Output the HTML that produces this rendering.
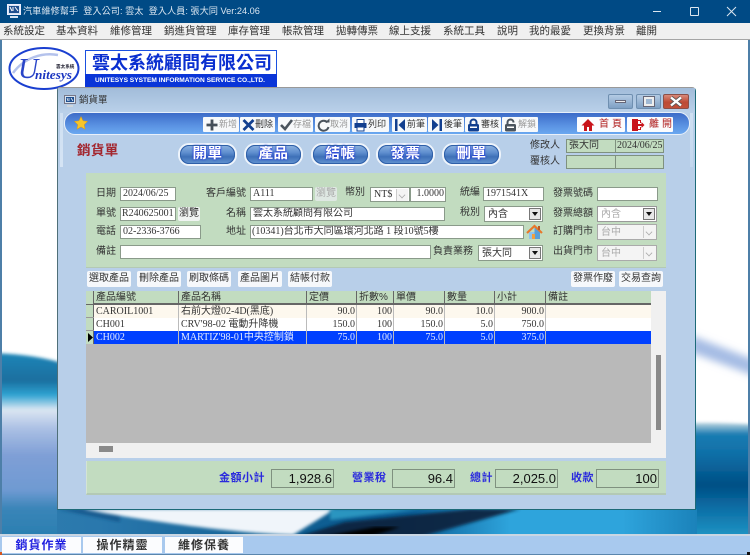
<!DOCTYPE html>
<html lang="zh-Hant"><head><meta charset="utf-8"><title>汽車維修幫手</title>
<style>
*{box-sizing:border-box}
html,body{margin:0;padding:0;width:750px;height:555px;overflow:hidden;background:#fff}
body{position:relative;font-family:"Liberation Sans","Noto Sans CJK TC",sans-serif;font-size:11px;color:#222}
div,span,svg{position:absolute}
.t{white-space:nowrap;line-height:14px}
.m{top:23px;height:17px;line-height:16px;font-size:10.5px;color:#333;white-space:nowrap}
.tb{top:117px;height:15px;background:#f7f9fb;border-radius:1px;line-height:15px;font-size:9px;color:#333;white-space:nowrap}
.tb span{line-height:15px}.dis{color:#999}
.tb svg{top:1px;left:2px}
.big{top:143px;width:59px;height:23px;border-radius:11px;border:2px solid #eef4fb;outline:1px solid #2e5fa8;outline-offset:-3px;background:linear-gradient(#8fb3df,#5f8fcf 40%,#3e70b8 62%,#6495d2);color:#fff;font-size:14.5px;font-weight:bold;text-align:center;line-height:19px;letter-spacing:.5px;text-shadow:0 0 2px #2238d8,0 0 2px #2238d8}
.l{white-space:nowrap;line-height:14px;font-size:10px;color:#333}
.i{background:#fff;border:1px solid #8a9a8a;height:14px;line-height:12px;padding-left:2px;font-family:"Liberation Serif","Noto Sans CJK TC",serif;font-size:10px;color:#333;white-space:nowrap;overflow:hidden}
.s{background:#fff;border:1px solid #8a9a8a;height:16px;line-height:15px;padding-left:3px;font-size:10px;color:#333;white-space:nowrap}
.s .a{right:1px;top:1px;width:12px;height:12px;background:#e8e8e8;border:1px solid #777}
.s .a:after{content:"";position:absolute;left:2px;top:3px;border-left:3px solid transparent;border-right:3px solid transparent;border-top:4px solid #111}
.c .a{background:#f4f4f4;border:0;border-left:1px solid #ccc}
.c .a:after{left:2px;top:3px;width:5px;height:5px;border:0;border-right:1px solid #aaa;border-bottom:1px solid #aaa;transform:rotate(45deg) scale(.8)}
.d{color:#aaa}
.btn{top:271px;height:16px;background:#f6f8fb;border-radius:2px;text-align:center;line-height:16px;font-size:10px;color:#333;white-space:nowrap}
.h{top:291px;height:14px;background:#c2dcc0;border-right:1px solid #666;border-bottom:2px solid #666;line-height:13px;font-size:10px;padding-left:2px;color:#333;white-space:nowrap}
.r{height:13px;line-height:13px;font-family:"Liberation Serif","Noto Sans CJK TC",serif;font-size:10px;white-space:nowrap;color:#333;border-right:1px solid #bbb;padding:0 1px 0 2px;overflow:hidden}
.n{text-align:right}
.w{color:#e6ecff}
.sum{top:469px;height:19px;width:63px;background:#c2dcc0;border:1px solid #7f917f;text-align:right;padding-right:1px;font-size:13px;line-height:18px;color:#111}
.sl{top:469px;color:#2a2add;font-size:11px;line-height:18px;font-weight:bold;white-space:nowrap;letter-spacing:.5px}
.tab{top:537px;height:16px;background:#fbfcfe;text-align:center;font-size:12px;font-weight:bold;line-height:16px;letter-spacing:1px;color:#333}
</style></head><body>

<!-- desktop background -->
<svg style="left:0;top:40px" width="750" height="496" viewBox="0 40 750 496">
<defs>
<linearGradient id="lw" gradientUnits="userSpaceOnUse" x1="0" y1="353" x2="0" y2="536"><stop offset="0" stop-color="#1f86b8"/><stop offset=".15" stop-color="#1a6f9f"/><stop offset=".23" stop-color="#2fa3d2"/><stop offset=".31" stop-color="#dbe6f2"/><stop offset=".42" stop-color="#a8bee3"/><stop offset=".56" stop-color="#7f9fd6"/><stop offset=".75" stop-color="#6f9ad2"/><stop offset=".85" stop-color="#3a85b8"/><stop offset="1" stop-color="#2a7fb1"/></linearGradient>
<linearGradient id="rw" gradientUnits="userSpaceOnUse" x1="0" y1="423" x2="0" y2="536"><stop offset="0" stop-color="#b9d3df"/><stop offset=".1" stop-color="#1a7cb2"/><stop offset=".28" stop-color="#0f6fa7"/><stop offset=".55" stop-color="#004f85"/><stop offset=".75" stop-color="#0c6ea5"/><stop offset="1" stop-color="#1f94c4"/></linearGradient>
<linearGradient id="bt" gradientUnits="userSpaceOnUse" x1="0" y1="0" x2="750" y2="0"><stop offset="0" stop-color="#2e7dae"/><stop offset=".13" stop-color="#2a78ad"/><stop offset=".4" stop-color="#0e5d90"/><stop offset=".55" stop-color="#0c5f97"/><stop offset=".68" stop-color="#2ea4dc"/><stop offset=".83" stop-color="#2ea4dc"/><stop offset="1" stop-color="#0d6aa2"/></linearGradient>
<filter id="b1" x="-20%" y="-20%" width="140%" height="140%"><feGaussianBlur stdDeviation="4"/></filter>
<filter id="b2" x="-10%" y="-10%" width="120%" height="120%"><feGaussianBlur stdDeviation="1.5"/></filter>
</defs>
<rect x="0" y="40" width="750" height="496" fill="#fff"/>
<path d="M690 335 L760 362 L760 378 L690 352Z" fill="#a5bce4" filter="url(#b1)"/>
<path d="M-10 353 Q35 354 65 364 L65 546 L-10 546Z" fill="url(#lw)" filter="url(#b2)"/>
<path d="M690 423 Q720 422 760 425 L760 546 L690 546Z" fill="url(#rw)" filter="url(#b2)"/>
<rect x="57" y="509" width="640" height="27" fill="url(#bt)"/>
<path d="M57 509 L120 509 L120 522 Z" fill="#175a8f" filter="url(#b2)"/>
<path d="M83 509 L335 509 L293 535 C230 533 140 520 83 509Z" fill="#f0f5fa" filter="url(#b2)"/>
<path d="M330 509 L420 509 L330 520Z" fill="#2c95c0" filter="url(#b2)"/>
<path d="M296 537 L345 522 L470 509 L520 509 L420 537Z" fill="#07233d" filter="url(#b2)" opacity=".92"/>
<path d="M320 537 L375 527 L400 527 L370 537Z" fill="#000" filter="url(#b2)"/>
</svg>
<div style="left:0;top:40px;width:2px;height:495px;background:#4d7fa8"></div>
<div style="left:748px;top:40px;width:2px;height:495px;background:#4d7fa8"></div>

<!-- titlebar -->
<div style="left:0;top:0;width:750px;height:23px;background:#004a85"></div>
<svg style="left:7px;top:4px" width="14" height="15" viewBox="0 0 14 15"><rect x=".5" y=".5" width="13" height="10" fill="#d7e4f2" stroke="#eef"/><rect x="2" y="2" width="10" height="7" fill="#1f4f8f"/><path d="M3 3l2 4M6 3v4M8 3l3 4" stroke="#fff" fill="none"/><rect x="3" y="12" width="8" height="2" fill="#d7e4f2"/></svg>
<div class="t" style="left:23px;top:4px;color:#d9e5f0;font-size:9.2px;line-height:15px">汽車維修幫手&nbsp; 登入公司: 雲太&nbsp; 登入人員: 張大同 Ver:24.06</div>
<div style="left:653px;top:11px;width:8px;height:1px;background:#dce6ef"></div>
<div style="left:690px;top:7px;width:9px;height:9px;border:1px solid #dce6ef;border-radius:1px"></div>
<svg style="left:726px;top:6px" width="11" height="11"><path d="M1 1l9 9M10 1l-9 9" stroke="#dce6ef" fill="none"/></svg>

<!-- menu -->
<div style="left:0;top:23px;width:750px;height:17px;background:#f0f0f0;border-bottom:1px solid #a5a5a5"></div>
<div class="m" style="left:3px">系統設定</div><div class="m" style="left:56px">基本資料</div><div class="m" style="left:110px">維修管理</div><div class="m" style="left:164px">銷進貨管理</div><div class="m" style="left:228px">庫存管理</div><div class="m" style="left:282px">帳款管理</div><div class="m" style="left:336px">拋轉傳票</div><div class="m" style="left:389px">線上支援</div><div class="m" style="left:443px">系統工具</div><div class="m" style="left:497px">說明</div><div class="m" style="left:529px">我的最愛</div><div class="m" style="left:583px">更換背景</div><div class="m" style="left:636px">離開</div>

<!-- logo -->
<svg style="left:8px;top:46px" width="72" height="45" viewBox="0 0 72 45"><ellipse cx="36" cy="22.5" rx="34.500" ry="20.500" fill="#fff" stroke="#1a3fd0" stroke-width="2"/><path d="M5 27C16 12 34 6 50 9" fill="none" stroke="#b4c2ec" stroke-width="2.500"/><text x="10" y="32" font-family="Liberation Serif,serif" font-style="italic" font-size="28" fill="#2a45c8">U</text><text x="27" y="33" font-family="Liberation Serif,serif" font-style="italic" font-weight="bold" font-size="12.500" fill="#1a35c0" textLength="37" lengthAdjust="spacingAndGlyphs">nitesys</text><text x="48" y="22" font-size="4.600" font-weight="bold" fill="#223" font-family="Noto Sans CJK TC,sans-serif">雲太系統</text></svg>
<div style="left:85px;top:50px;width:192px;height:37px;background:#fff;border:1px solid #1a50e0"></div>
<div class="t" style="left:92px;top:51px;font-size:18px;line-height:24px;font-weight:bold;color:#0a2fd0">雲太系統顧問有限公司</div>
<div style="left:85px;top:74px;width:192px;height:13px;background:#0a35d8"></div>
<div class="t" style="left:95px;top:74px;font-size:6.6px;line-height:13px;font-weight:bold;color:#fff">UNITESYS SYSTEM INFORMATION SERVICE CO.,LTD.</div>

<!-- window -->
<div style="left:57px;top:87px;width:639px;height:423px;background:#b8cfe9;border:1px solid #1c6a78;border-left-color:#4f6f78;border-top-color:#999;border-radius:3px 4px 0 0"></div>
<div style="left:58px;top:88px;width:637px;height:25px;background:linear-gradient(#a2bcd9,#bad1ea)"></div>
<div style="left:60px;top:113px;width:3px;height:54px;background:linear-gradient(#cfe0f2,#d5e4f4)"></div>
<div style="left:690px;top:113px;width:3px;height:54px;background:linear-gradient(#cfe0f2,#c2d7ee)"></div>
<svg style="left:64px;top:95px" width="12" height="13" viewBox="0 0 12 13"><rect x=".5" y=".5" width="11" height="8" fill="#d7e4f2" stroke="#778"/><rect x="2" y="2" width="8" height="5" fill="#1f4f8f"/><path d="M3 3l1 3M5 3v3M7 3l2 3" stroke="#fff" stroke-width=".7" fill="none"/><rect x="3" y="10" width="6" height="2" fill="#cfd6dd"/></svg>
<div class="t" style="left:79px;top:94px;font-size:9.5px;color:#333">銷貨單</div>
<div style="left:608px;top:94px;width:25px;height:15px;border:1px solid #6f8fb0;border-radius:2px;background:linear-gradient(#b4cbe4,#7fa0c4)"></div>
<div style="left:615px;top:100px;width:11px;height:3px;background:#eee;border:1px solid #667"></div>
<div style="left:636px;top:94px;width:25px;height:15px;border:1px solid #6f8fb0;border-radius:2px;background:linear-gradient(#b4cbe4,#7fa0c4)"></div>
<div style="left:644px;top:97px;width:10px;height:9px;background:#9fb8d3;border:2px solid #eee;outline:1px solid #667"></div>
<div style="left:663px;top:94px;width:26px;height:15px;border:1px solid #8b4f48;border-radius:2px;background:linear-gradient(#d98a7a,#bd4a35 55%,#c2513a)"></div>
<svg style="left:669px;top:96px" width="14" height="11"><path d="M2 1.5l10 8M12 1.5l-10 8" stroke="#555" stroke-width="4"/><path d="M2 1.5l10 8M12 1.5l-10 8" stroke="#fff" stroke-width="2.4"/></svg>

<!-- toolbar -->
<div style="left:64px;top:112px;width:626px;height:23px;border-radius:11px;border:1px solid #e8f0fa;background:linear-gradient(#3d6cc8,#5a92e2 60%,#6aa8f0)"></div>
<svg style="left:74px;top:116px" width="14" height="14" viewBox="0 0 14 14"><path d="M7 .5l2 4.3 4.6.6-3.4 3.2.9 4.7L7 10.9 2.900 13.300l.9-4.700L.4 5.400 5 4.800z" fill="#f8c52a" stroke="#d99a10" stroke-width=".5"/></svg>

<div class="tb" style="left:203px;width:36px"><svg width="14" height="14"><path d="M7 1.500v11M1.500 7h11" stroke="#454f5a" stroke-width="2.800"/></svg><span class="dis" style="left:16px">新增</span></div>
<div class="tb" style="left:240px;width:35px"><svg width="13" height="14"><path d="M1.500 2l10 10M11.500 2l-10 10" stroke="#123f8f" stroke-width="2.800"/></svg><span style="left:15px">刪除</span></div>
<div class="tb" style="left:278px;width:35px"><svg width="13" height="14"><path d="M1 7l4 4 7-9" stroke="#4a545e" stroke-width="2.600" fill="none"/></svg><span class="dis" style="left:15px">存檔</span></div>
<div class="tb" style="left:315px;width:35px"><svg width="13" height="14"><path d="M10.500 4.500A5 5 0 1 0 11.500 9" stroke="#4a545e" stroke-width="2" fill="none"/><path d="M8 4.500h4.500v-4z" fill="#4a545e"/></svg><span class="dis" style="left:15px">取消</span></div>
<div class="tb" style="left:352px;width:37px"><svg width="13" height="14"><rect x="3" y="1.500" width="7" height="4" fill="#fff" stroke="#123f8f"/><rect x=".5" y="5" width="12" height="5" fill="#123f8f"/><rect x="3" y="9" width="7" height="4" fill="#fff" stroke="#123f8f"/></svg><span style="left:16px">列印</span></div>
<div class="tb" style="left:392px;width:35px"><svg width="13" height="14"><rect x="1" y="1" width="2.500" height="12" fill="#123f8f"/><path d="M11 1v12L4.500 7z" fill="#123f8f"/></svg><span style="left:15px">前筆</span></div>
<div class="tb" style="left:428px;width:36px"><svg width="13" height="14"><rect x="9.500" y="1" width="2.500" height="12" fill="#123f8f"/><path d="M2 1v12l6.500-6z" fill="#123f8f"/></svg><span style="left:16px">後筆</span></div>
<div class="tb" style="left:465px;width:36px"><svg width="13" height="14"><path d="M3.500 6V4.500a3 3 0 0 1 6 0V6" stroke="#123f8f" stroke-width="2" fill="none"/><rect x="1" y="6" width="11" height="7.500" rx="1.500" fill="#123f8f"/><rect x="3" y="8.500" width="7" height="1.500" fill="#fff"/></svg><span style="left:16px">審核</span></div>
<div class="tb" style="left:502px;width:36px"><svg width="13" height="14"><path d="M3.500 6V4.500a3 3 0 0 1 6 0" stroke="#4a545e" stroke-width="2" fill="none"/><rect x="1" y="6" width="11" height="7.500" rx="1.500" fill="#4a545e"/><rect x="3" y="8.500" width="7" height="1.500" fill="#fff"/></svg><span class="dis" style="left:16px">解鎖</span></div>
<div class="tb" style="left:577px;width:48px;color:#b02020;letter-spacing:3px;font-size:10px;background:#fbfcfe"><svg style="left:4px" width="14" height="14"><path d="M7 1L.5 7.500h2.500v5.500h3V9h2v4h3V7.500h2.500z" fill="#c8141c"/></svg><span style="left:22px">首頁</span></div>
<div class="tb" style="left:627px;width:46px;color:#b02020;letter-spacing:3px;font-size:10px;background:#fbfcfe"><svg style="left:4px" width="14" height="14"><path d="M1 1h6v12H1z" fill="#c8141c"/><path d="M7 2.500h2.500V5M9.500 9v2.500H7" stroke="#c8141c" fill="none"/><path d="M7 6h3.500V4l3 3-3 3V8H7z" fill="#c8141c"/></svg><span style="left:22px">離開</span></div>

<div class="t" style="left:77px;top:142px;font-size:13.5px;line-height:17px;font-weight:bold;color:#a3262e;letter-spacing:.4px">銷貨單</div>
<div class="big" style="left:178px">開單</div><div class="big" style="left:244px">產品</div><div class="big" style="left:311px">結帳</div><div class="big" style="left:376px">發票</div><div class="big" style="left:442px">刪單</div>

<div class="l" style="left:530px;top:139px">修改人</div>
<div class="l" style="left:530px;top:155px">覆核人</div>
<div class="i" style="left:566px;top:139px;width:50px;background:#c2dcc0;border:1px solid #7f917f">張大同</div>
<div class="i" style="left:615px;top:139px;width:49px;background:#c2dcc0;border:1px solid #7f917f;padding-left:1px">2024/06/25</div>
<div class="i" style="left:566px;top:155px;width:50px;background:#c2dcc0;border:1px solid #7f917f"></div>
<div class="i" style="left:615px;top:155px;width:49px;background:#c2dcc0;border:1px solid #7f917f"></div>

<!-- green form -->
<div style="left:86px;top:173px;width:580px;height:95px;background:#c2dcc0;border-bottom:1px solid #b3c9b5"></div>
<div class="l" style="left:96px;top:187px">日期</div><div class="i" style="left:120px;top:187px;width:56px">2024/06/25</div>
<div class="l" style="left:206px;top:187px">客戶編號</div><div class="i" style="left:250px;top:187px;width:63px">A111</div>
<div class="btn" style="left:315px;top:187px;width:22px;height:14px;line-height:14px;color:#aaa;background:#dfe8e3">瀏覽</div>
<div class="l" style="left:345px;top:186px">幣別</div>
<div class="s c" style="left:370px;top:187px;width:40px;height:15px;line-height:13px;font-family:'Liberation Serif',serif">NT$<span class="a"></span></div>
<div class="i" style="left:410px;top:187px;width:36px;height:15px;text-align:right;padding-right:1px">1.0000</div>
<div class="l" style="left:460px;top:186px">統編</div><div class="i" style="left:483px;top:187px;width:61px">1971541X</div>
<div class="l" style="left:553px;top:187px">發票號碼</div><div class="i" style="left:597px;top:187px;width:61px"></div>

<div class="l" style="left:96px;top:207px">單號</div><div class="i" style="left:120px;top:207px;width:56px;padding-left:1px">R240625001</div>
<div class="btn" style="left:178px;top:207px;width:22px;height:14px;line-height:14px;background:#f0f4f2">瀏覽</div>
<div class="l" style="left:226px;top:207px">名稱</div><div class="i" style="left:250px;top:207px;width:195px">雲太系統顧問有限公司</div>
<div class="l" style="left:460px;top:206px">稅別</div><div class="s" style="left:484px;top:206px;width:59px">內含<span class="a"></span></div>
<div class="l" style="left:553px;top:207px">發票總額</div><div class="s d" style="left:597px;top:206px;width:60px;border-color:#9a9a9a">內含<span class="a"></span></div>

<div class="l" style="left:96px;top:225px">電話</div><div class="i" style="left:120px;top:225px;width:81px">02-2336-3766</div>
<div class="l" style="left:226px;top:225px">地址</div><div class="i" style="left:250px;top:225px;width:274px;padding-left:1px">(10341)台北市大同區環河北路 1 段10號5樓</div>
<svg style="left:526px;top:224px" width="17" height="16" viewBox="0 0 17 16"><path d="M3 8v7h11V8z" fill="#8fc4ee"/><path d="M8.500 3L14 8v7H8.500z" fill="#5aa0d8"/><path d="M1 9l7.500-7L16 9" stroke="#e8782a" stroke-width="2.200" fill="none"/><rect x="12" y="2" width="2" height="4" fill="#b85a28"/><rect x="6" y="10" width="3" height="5" fill="#f0a040"/></svg>
<div class="l" style="left:553px;top:225px">訂購門市</div><div class="s c d" style="left:597px;top:224px;width:60px;border-color:#aaa;background:#f4f4f4">台中<span class="a"></span></div>

<div class="l" style="left:96px;top:245px">備註</div><div class="i" style="left:120px;top:245px;width:311px"></div>
<div class="l" style="left:433px;top:245px">負責業務</div><div class="s" style="left:478px;top:245px;width:65px">張大同<span class="a"></span></div>
<div class="l" style="left:553px;top:245px">出貨門市</div><div class="s c d" style="left:597px;top:245px;width:60px;border-color:#aaa;background:#f4f4f4">台中<span class="a"></span></div>

<!-- action buttons -->
<div class="btn" style="left:87px;width:44px">選取產品</div><div class="btn" style="left:137px;width:44px">刪除產品</div><div class="btn" style="left:187px;width:44px">刷取條碼</div><div class="btn" style="left:238px;width:44px">產品圖片</div><div class="btn" style="left:288px;width:44px">結帳付款</div>
<div class="btn" style="left:571px;width:44px">發票作廢</div><div class="btn" style="left:619px;width:44px">交易查詢</div>

<!-- grid -->
<div style="left:86px;top:291px;width:580px;height:167px;background:#b9b9b9"></div>
<div style="left:651px;top:291px;width:15px;height:167px;background:#f0f0f0"></div>
<div style="left:86px;top:443px;width:580px;height:15px;background:#f0f0f0"></div>
<div style="left:656px;top:355px;width:5px;height:75px;background:#8a8a8a"></div>
<div style="left:99px;top:446px;width:14px;height:6px;background:#8a8a8a"></div>

<div style="left:86px;top:291px;width:8px;height:53px;background:#c2dcc0;border-right:1px solid #666"></div>
<div style="left:86px;top:304px;width:8px;height:1px;background:#666"></div>
<div style="left:86px;top:317px;width:8px;height:1px;background:#999"></div>
<div style="left:86px;top:330px;width:8px;height:1px;background:#999"></div>
<svg style="left:88px;top:333px" width="5" height="9"><path d="M0 0l5 4.500L0 9z" fill="#000"/></svg>

<div class="h" style="left:94px;width:85px">產品編號</div><div class="h" style="left:179px;width:128px">產品名稱</div><div class="h" style="left:307px;width:50px">定價</div><div class="h" style="left:357px;width:37px">折數%</div><div class="h" style="left:394px;width:51px">單價</div><div class="h" style="left:445px;width:50px">數量</div><div class="h" style="left:495px;width:51px">小計</div><div class="h" style="left:546px;width:105px;border-right:0">備註</div>

<div style="left:94px;top:305px;width:557px;height:13px;background:#fdf8ee"></div>
<div style="left:94px;top:318px;width:557px;height:13px;background:#fff"></div>
<div style="left:94px;top:331px;width:557px;height:13px;background:#0040ff"></div>

<div class="r" style="left:94px;top:305px;width:85px">CAROIL1001</div><div class="r" style="left:179px;top:305px;width:128px">右前大燈02-4D(黑底)</div><div class="r n" style="left:307px;top:305px;width:50px">90.0</div><div class="r n" style="left:357px;top:305px;width:37px">100</div><div class="r n" style="left:394px;top:305px;width:51px">90.0</div><div class="r n" style="left:445px;top:305px;width:50px">10.0</div><div class="r n" style="left:495px;top:305px;width:51px">900.0</div>
<div class="r" style="left:94px;top:318px;width:85px">CH001</div><div class="r" style="left:179px;top:318px;width:128px">CRV'98-02 電動升降機</div><div class="r n" style="left:307px;top:318px;width:50px">150.0</div><div class="r n" style="left:357px;top:318px;width:37px">100</div><div class="r n" style="left:394px;top:318px;width:51px">150.0</div><div class="r n" style="left:445px;top:318px;width:50px">5.0</div><div class="r n" style="left:495px;top:318px;width:51px">750.0</div>
<div class="r w" style="left:94px;top:331px;width:85px">CH002</div><div class="r w" style="left:179px;top:331px;width:128px">MARTIZ'98-01中央控制鎖</div><div class="r n w" style="left:307px;top:331px;width:50px">75.0</div><div class="r n w" style="left:357px;top:331px;width:37px">100</div><div class="r n w" style="left:394px;top:331px;width:51px">75.0</div><div class="r n w" style="left:445px;top:331px;width:50px">5.0</div><div class="r n w" style="left:495px;top:331px;width:51px">375.0</div>

<!-- totals -->
<div style="left:86px;top:461px;width:580px;height:34px;background:#c2dcc0;border-bottom:2px solid #b3c9b5;border-left:1px solid #d4e4d4"></div>
<div class="sl" style="left:219px">金額小計</div><div class="sum" style="left:271px">1,928.6</div>
<div class="sl" style="left:352px">營業稅</div><div class="sum" style="left:392px">96.4</div>
<div class="sl" style="left:470px">總計</div><div class="sum" style="left:495px">2,025.0</div>
<div class="sl" style="left:571px">收款</div><div class="sum" style="left:596px">100</div>

<!-- bottom tabs -->
<div style="left:0;top:534px;width:750px;height:21px;background:#a8c9ee;border-top:2px solid #c9d6e3;border-bottom:1px solid #5a86ad"></div>
<div class="tab" style="left:2px;width:79px;color:#2222e0">銷貨作業</div><div class="tab" style="left:83px;width:79px">操作精靈</div><div class="tab" style="left:165px;width:78px">維修保養</div>
<div style="left:0;top:552px;width:2px;height:3px;background:#d8541c"></div>
<div style="left:747px;top:552px;width:3px;height:3px;background:#111"></div>
</body></html>
